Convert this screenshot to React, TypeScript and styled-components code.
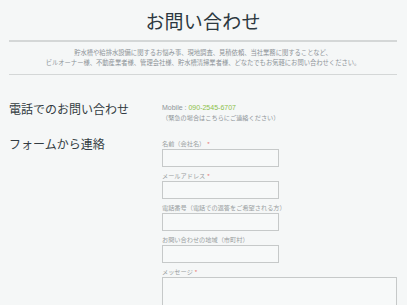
import React from "react";
import styled, {createGlobalStyle} from "styled-components";

const FONT = `"Liberation Sans", "Noto Sans CJK JP", sans-serif`;

const GlobalStyle = createGlobalStyle`
    html, body {
        margin: 0;
        padding: 0;
        background: #f5f7f7;
        font-family: ${FONT};
    }
`;

interface Field {
    label: string;
    required?: boolean;
    multiline?: boolean;
}

const FIELDS: Field[] = [
    {label: "名前（会社名）", required: true},
    {label: "メールアドレス", required: true},
    {label: "電話番号（電話での返答をご希望される方）"},
    {label: "お問い合わせの地域（市町村）"},
    {label: "メッセージ", required: true, multiline: true},
];

export default function App() {
    return (
        <>
            <GlobalStyle />
            <Page>
                <Title>お問い合わせ</Title>
                <Rule />
                <Lead>
                    貯水槽や給排水設備に関するお悩み事、現地調査、見積依頼、当社業務に関することなど、
                    <br />
                    ビルオーナー様、不動産業者様、管理会社様、貯水槽清掃業者様、どなたでもお気軽にお問い合わせください。
                </Lead>
                <Rule />
                <Section $first>
                    <Heading>電話でのお問い合わせ</Heading>
                    <Side $pad={1.5}>
                        <Note $latin>
                            Mobile : <Phone>090-2545-6707</Phone>
                        </Note>
                        <Note>（緊急の場合はこちらにご連絡ください）</Note>
                    </Side>
                </Section>
                <Section>
                    <Heading>フォームから連絡</Heading>
                    <Side $pad={2}>
                        {FIELDS.map(f => (
                            <FieldWrap key={f.label}>
                                <Label>
                                    {f.label}
                                    {f.required && <Req>*</Req>}
                                </Label>
                                {f.multiline ? <TextArea /> : <Input type="text" />}
                            </FieldWrap>
                        ))}
                    </Side>
                </Section>
            </Page>
        </>
    );
}

const Page = styled.div`
    padding: 11px 10px 0 9px;
    height: 305px;
    box-sizing: border-box;
    overflow: hidden;
`;

const Title = styled.h1`
    margin: 0 0 5px;
    font-size: 19px;
    line-height: 24px;
    font-weight: 400;
    text-align: center;
    color: #2c3840;
    letter-spacing: 0.2px;
`;

const Rule = styled.hr`
    margin: 0;
    border: none;
    height: 1.5px;
    background: #d4d7d7;
`;

const Lead = styled.p`
    margin: 6px 0 6px;
    font-size: 6.3px;
    line-height: 10px;
    text-align: center;
    color: #8d9397;
`;

const Section = styled.div<{$first?: boolean}>`
    display: grid;
    grid-template-columns: 153px 1fr;
    align-items: start;
    margin-top: ${p => (p.$first ? "26.5px" : "13.5px")};
`;

const Heading = styled.h2`
    margin: 0;
    font-size: 12px;
    line-height: 16px;
    font-weight: 400;
    color: #333c42;
    white-space: nowrap;
`;

const Side = styled.div<{$pad: number}>`
    padding-top: ${p => p.$pad}px;
    display: flex;
    flex-direction: column;
`;

const Note = styled.div<{$latin?: boolean}>`
    font-size: ${p => (p.$latin ? "7px" : "6.2px")};
    line-height: 10px;
    color: #8e9498;
`;

const Phone = styled.span`
    color: #8cbf4a;
`;

const FieldWrap = styled.div`
    display: flex;
    flex-direction: column;
    margin-bottom: 4px;
`;

const Label = styled.label`
    font-size: 6.2px;
    line-height: 9px;
    margin-bottom: 1px;
    color: #999ea1;
`;

const Req = styled.span`
    color: #e8706a;
    margin-left: 2px;
`;

const Input = styled.input`
    box-sizing: border-box;
    width: 117px;
    height: 18px;
    margin: 0;
    border: 1px solid #c6c9c9;
    background: #f7f9f9;
    outline: none;
`;

const TextArea = styled.textarea`
    box-sizing: border-box;
    width: 235px;
    height: 100px;
    margin: 0;
    border: 1px solid #c6c9c9;
    background: #f7f9f9;
    resize: none;
    outline: none;
`;
